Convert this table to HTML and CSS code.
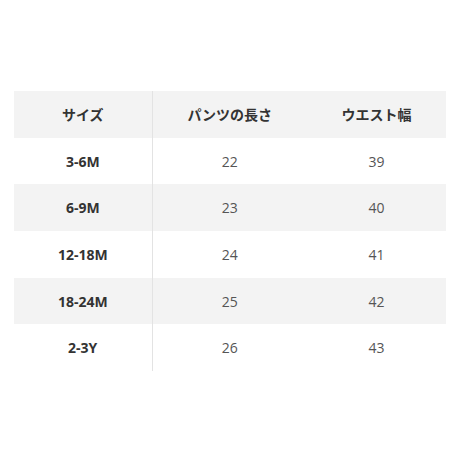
FILE: index.html
```html
<!DOCTYPE html>
<html lang="ja">
<head>
    <meta charset="UTF-8">
    <title>サイズ表</title>
    <link rel="stylesheet" href="styles.css">
</head>
<body>
    <div class="size-wrap">
        <table class="size-table">
            <thead>
                <tr>
                    <th class="col-size">サイズ</th>
                    <th class="col-len">パンツの長さ</th>
                    <th class="col-waist">ウエスト幅</th>
                </tr>
            </thead>
            <tbody>
                <tr><th>3-6M</th><td>22</td><td>39</td></tr>
                <tr><th>6-9M</th><td>23</td><td>40</td></tr>
                <tr><th>12-18M</th><td>24</td><td>41</td></tr>
                <tr><th>18-24M</th><td>25</td><td>42</td></tr>
                <tr><th>2-3Y</th><td>26</td><td>43</td></tr>
            </tbody>
        </table>
    </div>
</body>
</html>
```

FILE: styles.css
```css
* {
    margin: 0;
    padding: 0;
    box-sizing: border-box;
}

body {
    font-family: "Open Sans", "Noto Sans CJK JP", sans-serif;
    background: #fff;
    color: #333;
    width: 460px;
    height: 460px;
}

.size-wrap {
    padding: 91px 14px 0 14px;
}

.size-table {
    width: 432px;
    border-collapse: collapse;
    table-layout: fixed;
    font-size: 14px;
}

.size-table th,
.size-table td {
    height: 46.7px;
    text-align: center;
    vertical-align: middle;
    padding: 0;
}

.col-size { width: 138px; }
.col-len { width: 155px; }
.col-waist { width: 139px; }

.size-table thead tr,
.size-table tbody tr:nth-child(even) {
    background: #f3f3f3;
}

.size-table th {
    font-weight: 700;
    color: #333;
}

.size-table td {
    font-weight: 400;
    color: #555;
}

.size-table tr > :first-child {
    border-right: 1px solid #e3e3e3;
}
```
